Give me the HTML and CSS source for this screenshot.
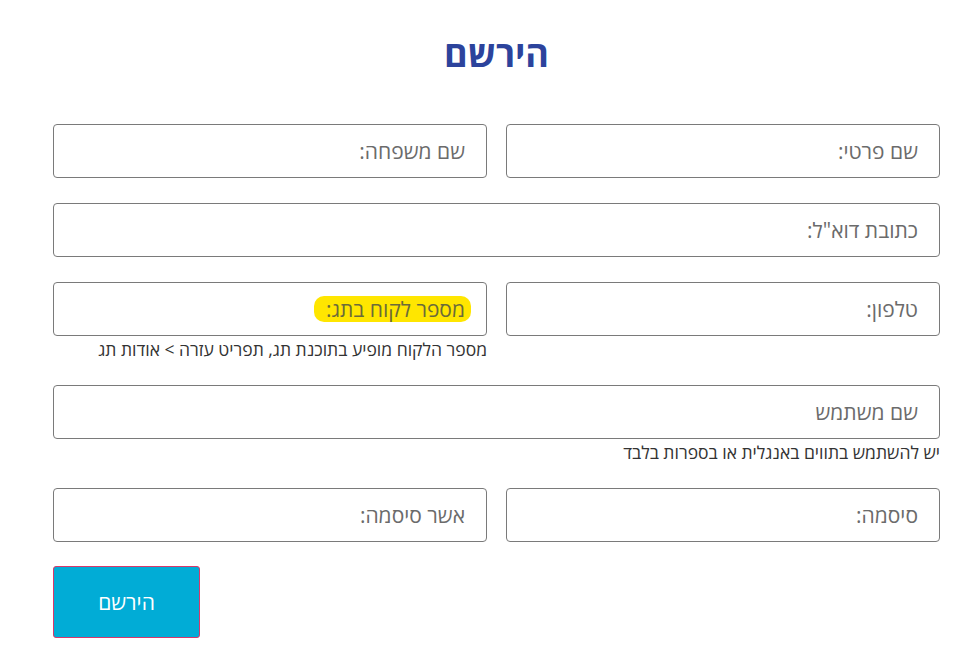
FILE: index.html
```html
<!DOCTYPE html>
<html lang="he" dir="rtl">
<head>
<meta charset="utf-8">
<title>הירשם</title>
<link rel="stylesheet" href="styles.css">
</head>
<body>
<div class="page">
  <h1 class="title">הירשם</h1>
  <form class="form">
    <div class="row two">
      <div class="field"><span class="ph">שם פרטי:</span></div>
      <div class="field"><span class="ph">שם משפחה:</span></div>
    </div>
    <div class="row">
      <div class="field"><span class="ph">כתובת דוא"ל:</span></div>
    </div>
    <div class="row two">
      <div class="group">
        <div class="field"><span class="ph">טלפון:</span></div>
      </div>
      <div class="group">
        <div class="field"><span class="ph mark">מספר לקוח בתג:</span></div>
        <div class="help">מספר הלקוח מופיע בתוכנת תג, תפריט עזרה &gt; אודות תג</div>
      </div>
    </div>
    <div class="row">
      <div class="group">
        <div class="field"><span class="ph">שם משתמש</span></div>
        <div class="help">יש להשתמש בתווים באנגלית או בספרות בלבד</div>
      </div>
    </div>
    <div class="row two">
      <div class="field"><span class="ph">סיסמה:</span></div>
      <div class="field"><span class="ph">אשר סיסמה:</span></div>
    </div>
    <div class="actions">
      <button type="button" class="btn">הירשם</button>
    </div>
  </form>
</div>
</body>
</html>
```
FILE: styles.css
```css
html, body {
  margin: 0;
  padding: 0;
  background: #fff;
}
body {
  font-family: "Open Sans", "DejaVu Sans", sans-serif;
  color: #333;
}
.page {
  width: 887px;
  margin-right: 32px;
  margin-left: 53px;
}
.title {
  margin: 33px 0 49px;
  font-size: 36px;
  line-height: 42px;
  font-weight: 700;
  color: #2c439c;
  text-align: center;
}
.form {
  display: flex;
  flex-direction: column;
  gap: 25px;
}
.row.two {
  display: grid;
  grid-template-columns: 1fr 1fr;
  column-gap: 19px;
}
.group {
  display: flex;
  flex-direction: column;
}
.field {
  height: 54px;
  box-sizing: border-box;
  border: 1px solid #7a7a7a;
  border-radius: 4px;
  display: flex;
  align-items: center;
  padding: 0 21px;
  font-size: 21px;
  color: #6b6b6b;
}
.ph {
  line-height: 26px;
}
.mark {
  background: #ffe600;
  padding: 0 6px 0 12px;
  margin-right: -6px;
  border-radius: 10px;
  color: #6b6b3a;
}
.help {
  margin-top: 2px;
  font-size: 17.5px;
  line-height: 22px;
  color: #333;
}
.actions {
  display: flex;
  justify-content: flex-end;
  margin-top: -1px;
}
.btn {
  width: 147px;
  height: 72px;
  background: #01acd6;
  border: 1px solid #d8386b;
  border-radius: 3px;
  color: #fff;
  font-family: "Open Sans", "DejaVu Sans", sans-serif;
  font-size: 21px;
  cursor: pointer;
}
```
